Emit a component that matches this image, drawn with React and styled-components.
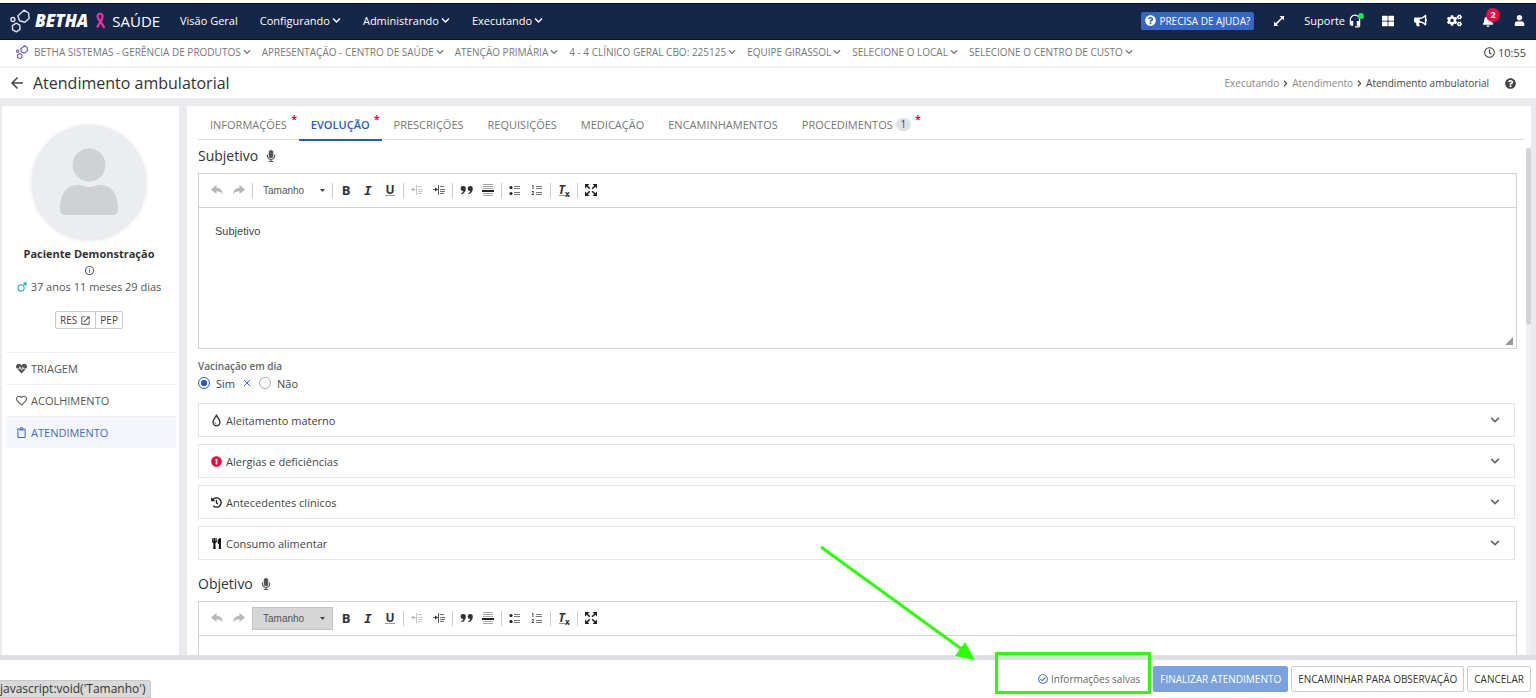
import React, { useState } from "react";
import styled, { createGlobalStyle, css } from "styled-components";
import {
  FaBell,
  FaBullhorn,
  FaChevronDown,
  FaChevronRight,
  FaCogs,
  FaExclamationCircle,
  FaHeartbeat,
  FaHistory,
  FaMicrophone,
  FaQuestionCircle,
  FaRegCheckCircle,
  FaRegClipboard,
  FaRegClock,
  FaRegHeart,
  FaThLarge,
  FaUser,
  FaUtensils,
} from "react-icons/fa";
import {
  MdArrowBack,
  MdHeadsetMic,
  MdInfoOutline,
  MdOpenInNew,
} from "react-icons/md";

const GlobalStyle = createGlobalStyle`
  * {
    box-sizing: border-box;
  }
  body {
    margin: 0;
    font-family: "Open Sans", "Noto Sans", sans-serif;
    font-size: 11px;
    color: #444;
  }
  button, input, select, textarea {
    font-family: inherit;
    margin: 0;
  }
  button {
    cursor: pointer;
  }
  svg {
    display: block;
    flex: none;
  }
`;

const Page = styled.div`
  position: relative;
  display: flex;
  flex-direction: column;
  height: 100vh;
  overflow: hidden;
  background-color: #fff;
`;

/* top bar */
const TopBar = styled.header`
  display: flex;
  align-items: center;
  height: 37px;
  flex: none;
  margin-top: 3px;
  padding: 0 11px 2px 10px;
  color: #fff;
  background-color: #152647;
  border-top: 1px solid #010a3d;
  border-bottom: 1px solid #0a1230;
`;
const Brand = styled.a`
  display: flex;
  align-items: center;
  width: 149px;
  margin-right: 21px;
  color: #fff;
  text-decoration: none;
`;
const BrandName = styled.span`
  font-size: 17px;
  font-weight: 800;
  font-style: italic;
  line-height: 20px;
  margin: 0 7px 0 5px;
`;
const BrandProduct = styled.span`
  font-size: 15px;
  line-height: 20px;
  margin-left: 6px;
`;
const Nav = styled.nav`
  display: flex;
  flex: 1;
  gap: 22px;
`;
const NavLink = styled.a`
  display: flex;
  align-items: center;
  gap: 2px;
  color: #fff;
  font-size: 11px;
  text-decoration: none;
  white-space: nowrap;
`;
const TopActions = styled.div`
  display: flex;
  align-items: center;
  gap: 20px;
`;
const HelpButton = styled.button`
  display: flex;
  align-items: center;
  gap: 3px;
  height: 18px;
  padding: 0 4px;
  border: none;
  border-radius: 2px;
  color: #fff;
  background-color: #3767c3;
  font-size: 10px;
  white-space: nowrap;
`;
const TopButton = styled.button`
  position: relative;
  display: flex;
  align-items: center;
  gap: 3px;
  padding: 0;
  border: none;
  background: none;
  color: #fff;
  font-size: 11px;
`;
const OnlineDot = styled.span`
  position: absolute;
  top: 0;
  right: -2px;
  width: 6px;
  height: 6px;
  border-radius: 50%;
  background-color: #0be850;
`;
const Counter = styled.span`
  position: absolute;
  top: -7px;
  right: -6px;
  width: 14px;
  height: 14px;
  line-height: 14px;
  border-radius: 50%;
  background-color: #f5053b;
  font-size: 9px;
  font-weight: 700;
  text-align: center;
`;

/* context bar */
const ContextBar = styled.div`
  display: flex;
  align-items: center;
  gap: 11px;
  height: 28px;
  flex: none;
  padding: 0 10px 2px 16px;
  border-bottom: 2px solid #f2f2f2;
`;
const ContextButton = styled.button`
  display: flex;
  align-items: center;
  gap: 2px;
  padding: 0;
  border: none;
  background: none;
  color: #777;
  font-size: 10px;
  white-space: nowrap;
`;
const ContextLogo = styled.span`
  margin-right: 4px;
`;
const Clock = styled.div`
  display: flex;
  align-items: center;
  gap: 3px;
  margin-left: auto;
  font-size: 11px;
`;

/* title bar */
const TitleBar = styled.div`
  display: flex;
  align-items: center;
  height: 30px;
  flex: none;
  padding: 0 20px 0 8px;
`;
const BackButton = styled.button`
  display: flex;
  padding: 0;
  margin-right: 7px;
  border: none;
  background: none;
  color: #444;
`;
const PageTitle = styled.h1`
  flex: 1;
  margin: 0;
  font-size: 16px;
  font-weight: 400;
  color: #333;
`;
const Breadcrumb = styled.nav`
  display: flex;
  align-items: center;
  gap: 3px;
  margin-right: 16px;
  font-size: 10px;
  color: #444;
  a {
    color: #888;
    text-decoration: none;
  }
`;

/* body */
const Body = styled.div`
  display: flex;
  flex: 1;
  min-height: 0;
  gap: 8px;
  padding: 8px 5px 0 2px;
  background-color: #e9ebef;
`;
const Sidebar = styled.aside`
  width: 177px;
  flex: none;
  padding: 19px 3px 0 4px;
  background-color: #fff;
`;
const Patient = styled.div`
  display: flex;
  flex-direction: column;
  align-items: center;
  padding-right: 4px;
`;
const Avatar = styled.div`
  width: 114px;
  height: 114px;
  border-radius: 50%;
  background-color: #ebedf0;
  box-shadow: 0 1px 4px #ddd;
`;
const PatientName = styled.strong`
  margin-top: 6px;
  line-height: 18px;
  font-size: 11px;
  font-weight: 700;
  color: #333;
`;
const InfoButton = styled.button`
  display: flex;
  margin: 2px 0;
  padding: 0;
  border: none;
  background: none;
  color: #555;
`;
const Age = styled.div`
  display: flex;
  align-items: center;
  gap: 4px;
  line-height: 18px;
  font-size: 11px;
  color: #555;
`;
const RecordButtons = styled.div`
  display: flex;
  margin-top: 15px;
  border: 1px solid #ccc;
  border-radius: 2px;
`;
const RecordButton = styled.button`
  display: flex;
  align-items: center;
  gap: 3px;
  height: 16px;
  padding: 0 4px;
  border: none;
  background: none;
  color: #444;
  font-size: 10px;
  & + & {
    border-left: 1px solid #ccc;
  }
`;
const SideMenu = styled.nav`
  margin-top: 23px;
`;
const SideLink = styled.a`
  display: flex;
  align-items: center;
  gap: 4px;
  height: 32px;
  padding: 0 10px;
  border-top: 1px solid #f0f0f0;
  font-size: 11px;
  text-decoration: none;
  color: ${(props) => (props.$active ? "#3d6cc8" : "#555")};
  background-color: ${(props) => (props.$active ? "#f4f6fb" : "#fff")};
`;
const Main = styled.main`
  display: flex;
  flex-direction: column;
  flex: 1;
  min-width: 0;
  background-color: #fff;
`;
const Tabs = styled.div`
  display: flex;
  height: 34px;
  flex: none;
  margin: 0 7px 0 11px;
  border-bottom: 1px solid #dcdfe0;
`;
const Tab = styled.button`
  position: relative;
  display: flex;
  align-items: center;
  gap: 3px;
  height: 35px;
  padding: 4px 12px 0;
  border: none;
  border-bottom: 2px solid transparent;
  background: none;
  color: #777;
  font-size: 11px;
  white-space: nowrap;
  ${(props) =>
    props.$active &&
    css`
      border-bottom-color: #2a5bc4;
      color: #2a5bc4;
      font-weight: 600;
    `}
`;
const Required = styled.span`
  position: absolute;
  top: 6px;
  right: 2px;
  color: #f5053b;
  font-size: 10px;
  font-weight: 700;
`;
const TabBadge = styled.span`
  width: 15px;
  height: 13px;
  line-height: 13px;
  border-radius: 7px;
  background-color: #dfe1e4;
  color: #444;
  font-size: 10px;
`;
const ScrollArea = styled.div`
  display: flex;
  flex: 1;
  min-height: 0;
`;
const Content = styled.div`
  flex: 1;
  min-width: 0;
  overflow: hidden;
  padding: 6px 9px 0 11px;
`;
const ScrollTrack = styled.div`
  width: 5px;
  flex: none;
  margin-top: 8px;
  background-color: #f0f0f0;
`;
const ScrollThumb = styled.div`
  height: 35%;
  border-radius: 3px;
  background-color: #d3d3d3;
`;

const SectionTitle = styled.h2`
  display: flex;
  align-items: center;
  gap: 7px;
  height: 20px;
  line-height: 20px;
  margin: 0 0 7px;
  font-size: 14px;
  font-weight: 400;
  color: #333;
`;
const MicButton = styled.button`
  padding: 0;
  border: none;
  background: none;
  color: #555;
`;

/* rich text editor */
const EditorBox = styled.div`
  position: relative;
  border: 1px solid #d3d3d3;
`;
const Toolbar = styled.div`
  display: flex;
  align-items: center;
  height: 34px;
  padding: 0 7px 1px;
  border-bottom: 1px solid #d3d3d3;
`;
const Tool = styled.button`
  display: flex;
  align-items: center;
  justify-content: center;
  width: 22px;
  height: 23px;
  padding: 0;
  border: none;
  background: none;
  color: #333;
  opacity: ${(props) => (props.disabled ? 0.35 : 1)};
`;
const Separator = styled.span`
  width: 1px;
  height: 15px;
  margin: 0 2px;
  background-color: #ccc;
`;
const SizeBox = styled.div`
  display: flex;
  align-items: center;
  width: 81px;
  height: 23px;
  margin: 0 2px;
  padding-right: 8px;
  background: linear-gradient(#ccc, #ccc) left / 1px 15px no-repeat,
    linear-gradient(#ccc, #ccc) right / 1px 15px no-repeat;
  ${(props) =>
    props.$pressed &&
    css`
      background: #d6d6d6;
      outline: 1px solid #c4c4c4;
      outline-offset: -1px;
    `}
`;
const SizeSelect = styled.select`
  flex: 1;
  min-width: 0;
  padding: 0 0 0 11px;
  border: none;
  appearance: none;
  background: none;
  color: #555;
  font-family: "Liberation Sans", Arial, sans-serif;
  font-size: 10px;
`;
const BoldMark = styled.b`
  font-size: 13px;
  line-height: 13px;
`;
const ItalicMark = styled.i`
  font-family: "DejaVu Sans Mono", monospace;
  font-size: 13px;
  line-height: 13px;
  font-weight: 700;
`;
const UnderlineMark = styled.b`
  font-size: 12px;
  line-height: 11px;
  border-bottom: 1px solid #999;
`;
const ClearMark = styled.i`
  font-size: 12px;
  line-height: 11px;
  font-weight: 700;
  border-bottom: 1px solid #999;
  sub {
    font-style: normal;
    font-size: 8px;
    line-height: 0;
  }
`;
const EditorText = styled.textarea`
  display: block;
  width: 100%;
  height: 140px;
  padding: 17px 16px;
  border: none;
  outline: none;
  resize: none;
  color: #444;
  font-family: "Liberation Sans", Arial, sans-serif;
  font-size: 11px;
`;
const ResizeHandle = styled.span`
  position: absolute;
  right: 3px;
  bottom: 3px;
  border-left: 8px solid transparent;
  border-bottom: 8px solid #999;
`;

const Vaccination = styled.fieldset`
  margin: 0;
  padding: 10px 0 0;
  border: none;
`;
const Legend = styled.legend`
  float: left;
  width: 100%;
  padding: 0;
  line-height: 14px;
  font-size: 10px;
  font-weight: 600;
  color: #666;
`;
const RadioRow = styled.div`
  display: flex;
  align-items: center;
  clear: both;
  height: 20px;
  gap: 8px;
`;
const RadioLabel = styled.label`
  display: flex;
  align-items: center;
  gap: 6px;
`;
const Radio = styled.input`
  appearance: none;
  width: 12px;
  height: 12px;
  border: 1px solid #aaa;
  border-radius: 50%;
  &:checked {
    border-color: #2a5bc4;
    background: radial-gradient(#2a5bc4 40%, #fff 50%);
  }
`;
const ClearButton = styled.button`
  display: flex;
  padding: 0;
  border: none;
  background: none;
  color: #3d6cc8;
`;

const Cards = styled.div`
  display: flex;
  flex-direction: column;
  gap: 7px;
  margin: 10px 2px 14px 0;
`;
const Card = styled.button`
  display: flex;
  align-items: center;
  gap: 4px;
  height: 34px;
  padding: 0 14px 0 12px;
  border: 1px solid #e4e4e4;
  background-color: #fff;
  color: #444;
  font-size: 11px;
  text-align: left;
  span {
    flex: 1;
  }
`;

/* footer */
const Footer = styled.footer`
  display: flex;
  align-items: center;
  justify-content: flex-end;
  gap: 3px;
  height: 43px;
  flex: none;
  padding: 0 5px 0 0;
  border-top: 5px solid #dddfe3;
  background-color: #fff;
`;
const SaveStatus = styled.div`
  position: relative;
  display: flex;
  align-items: center;
  gap: 3px;
  margin-right: 10px;
  font-size: 10px;
  color: #666;
`;
const Highlight = styled.span`
  position: absolute;
  right: -11px;
  top: -20px;
  width: 156px;
  height: 42px;
  border: 3px solid #2cff05;
`;
const Arrow = styled.svg`
  position: absolute;
  right: 559px;
  bottom: 36px;
`;
const FooterButton = styled.button`
  height: 26px;
  padding: 0 6px;
  border: 1px solid ${(props) => (props.$primary ? "#7aa2dd" : "#ccc")};
  border-radius: 2px;
  background-color: ${(props) => (props.$primary ? "#7aa2dd" : "#fff")};
  color: ${(props) => (props.$primary ? "#fff" : "#333")};
  font-size: 10px;
  white-space: nowrap;
`;
const LinkHint = styled.div`
  position: absolute;
  left: 0;
  bottom: 0;
  height: 18px;
  line-height: 16px;
  padding-right: 5px;
  border: 1px solid #c8c8c8;
  border-left: none;
  border-radius: 0 3px 0 0;
  background-color: #d9d9d9;
  color: #333;
  font-size: 12px;
`;

const Hexagons = ({ size, color, weight = 1.4 }) => (
  <svg
    width={size}
    height={(size * 24) / 20}
    viewBox="0 0 20 24"
    fill="none"
    stroke={color}
    strokeWidth={weight}
    strokeLinejoin="round"
  >
    <path d="M14 1.200l4.600 2.800.5 5.500-4.300 3.700-5.300-1.400-1.600-5.100z" />
    <path d="M6.200 14.200l3.600 2 .2 4.200-3.600 2.400-3.800-2-.2-4.200z" />
    <circle cx="2.900" cy="10.500" r="2" />
  </svg>
);

const Ribbon = () => (
  <svg width="11" height="18" viewBox="0 0 11 18" fill="none" stroke="#f22fa8">
    <path
      d="M9.200 16C7.500 11 2.600 8 2.600 4.300c0-3.400 5-3.400 5 0C7.600 8 4.500 11 2 15.500"
      strokeWidth="2.200"
    />
  </svg>
);

const DiagonalArrows = () => (
  <svg width="10" height="10" viewBox="0 0 10 10" fill="#fff">
    <path d="M5.600 0H10v4.400zM0 5.600V10h4.400z" />
    <path d="M2 8l6-6" stroke="#fff" strokeWidth="1.600" />
  </svg>
);

const Male = () => (
  <svg
    width="10"
    height="10"
    viewBox="0 0 11 11"
    fill="none"
    stroke="#26a3dd"
    strokeWidth="1.2"
  >
    <circle cx="4.500" cy="6.500" r="3.400" />
    <path d="M7 4l3-3M7 1h3v3" />
  </svg>
);

const Person = () => (
  <svg width="114" height="114" viewBox="0 0 114 114" fill="#d0d1d3">
    <circle cx="57" cy="40" r="16.500" />
    <path d="M28 84c0-18 9-24 18-24 4 0 6 2 11 2s7-2 11-2c9 0 18 6 18 24 0 4-2 6-6 6H34c-4 0-6-2-6-6z" />
  </svg>
);

const Drop = () => (
  <svg
    width="11"
    height="13"
    viewBox="0 0 11 13"
    fill="none"
    stroke="#333"
    strokeWidth="1.3"
    strokeLinejoin="round"
  >
    <path d="M5.500 1C4.800 3.500 2 5.500 2 8.300a3.500 3.500 0 0 0 7 0C9 5.500 6.200 3.500 5.500 1z" />
    <path d="M3.800 8.300c0 1 .7 1.800 1.700 1.900" strokeWidth="0.8" />
  </svg>
);

const Undo = () => (
  <svg width="12" height="10" viewBox="0 0 12 10" fill="#333">
    <path d="M0 4.500L5.500 0v2.800C9 3 11.500 5 12 9.500 10.500 7 8.500 6.200 5.500 6.200V9z" />
  </svg>
);

const Redo = () => (
  <svg width="12" height="10" viewBox="0 0 12 10" fill="#333">
    <path d="M12 4.500L6.500 0v2.800C3 3 .5 5 0 9.500c1.500-2.500 3.500-3.300 6.500-3.300V9z" />
  </svg>
);

const Indent = ({ out }) => (
  <svg width="12" height="12" viewBox="0 0 12 12" stroke="#333" fill="#333">
    <path d="M5.500 1v10" opacity="0.8" />
    <path d="M7 2.500h4M7 5.500h5M7 7.500h5M7 9.500h4" opacity="0.7" />
    <path d="M0 5.500h5" opacity="0.7" />
    <path d={out ? "M3 3.500v4L0 5.500z" : "M2 3.500v4L5 5.500z"} stroke="none" />
  </svg>
);

// closing quote marks: round head with the tail curling down to the left
const Quote = () => (
  <svg width="13" height="10" viewBox="0 0 13 10" fill="#333">
    <path d="M3 1a2.600 2.600 0 0 1 2.800 2.800C5.800 6.500 4.200 8.600 1.600 9.300l-.5-1C2.500 7.700 3.200 6.800 3.300 6A2.500 2.500 0 1 1 3 1z" />
    <path d="M10 1a2.600 2.600 0 0 1 2.800 2.800c0 2.700-1.600 4.800-4.200 5.500l-.5-1c1.400-.6 2.100-1.500 2.200-2.300A2.500 2.500 0 1 1 10 1z" />
  </svg>
);

const Rule = () => (
  <svg width="12" height="13" viewBox="0 0 12 13">
    <path
      d="M1 .5h10M1 2.500h10M1 4.500h10M1 9.500h10M1 11.500h10"
      stroke="#aaa"
      strokeWidth="1"
    />
    <path d="M0 7h12" stroke="#222" strokeWidth="2" />
  </svg>
);

const BulletList = () => (
  <svg width="12" height="11" viewBox="0 0 12 11" fill="#222">
    <circle cx="2" cy="2.500" r="1.600" />
    <circle cx="2" cy="8.500" r="1.600" />
    <path d="M5 1.500h6M5 3.500h6M5 7.500h6M5 9.500h6" stroke="#777" />
  </svg>
);

const NumberList = () => (
  <svg width="12" height="12" viewBox="0 0 12 12" fill="none" stroke="#444">
    <path d="M1 1.500h1V5M.8 7.500h1.700v1L1 10.500h2" />
    <path d="M5 2.500h6M5 4.500h6M5 8.500h6M5 10.500h6" stroke="#777" />
  </svg>
);

const Maximize = () => (
  <svg width="12" height="12" viewBox="0 0 12 12" fill="#222">
    <path d="M0 0h4.500L0 4.500zM12 0v4.500L7.500 0zM0 12V7.500L4.500 12zM12 12H7.500L12 7.500z" />
    <path
      d="M1.500 1.500l3.300 3.300M10.500 1.500L7.200 4.800M1.500 10.500l3.300-3.300M10.500 10.500L7.200 7.200"
      stroke="#222"
      strokeWidth="1.600"
    />
  </svg>
);

const Editor = ({ title, defaultText, pressed }) => (
  <>
    <SectionTitle>
      {title}
      <MicButton aria-label={`Ditar ${title}`}>
        <FaMicrophone size={12} />
      </MicButton>
    </SectionTitle>
    <EditorBox>
      <Toolbar>
        <Tool aria-label="Desfazer" disabled>
          <Undo />
        </Tool>
        <Tool aria-label="Refazer" disabled>
          <Redo />
        </Tool>
        <SizeBox $pressed={pressed}>
          <SizeSelect aria-label={`Tamanho da fonte em ${title}`}>
            <option>Tamanho</option>
          </SizeSelect>
          <svg width="5" height="3" viewBox="0 0 5 3" fill="#444">
            <path d="M0 0h5L2.500 3z" />
          </svg>
        </SizeBox>
        <Tool aria-label="Negrito">
          <BoldMark>B</BoldMark>
        </Tool>
        <Tool aria-label="Itálico">
          <ItalicMark>I</ItalicMark>
        </Tool>
        <Tool aria-label="Sublinhado">
          <UnderlineMark>U</UnderlineMark>
        </Tool>
        <Separator />
        <Tool aria-label="Diminuir recuo" disabled>
          <Indent out />
        </Tool>
        <Tool aria-label="Aumentar recuo">
          <Indent />
        </Tool>
        <Separator />
        <Tool aria-label="Citação">
          <Quote />
        </Tool>
        <Tool aria-label="Linha horizontal">
          <Rule />
        </Tool>
        <Separator />
        <Tool aria-label="Lista com marcadores">
          <BulletList />
        </Tool>
        <Tool aria-label="Lista numerada">
          <NumberList />
        </Tool>
        <Separator />
        <Tool aria-label="Remover formatação">
          <ClearMark>
            T<sub>x</sub>
          </ClearMark>
        </Tool>
        <Separator />
        <Tool aria-label="Maximizar">
          <Maximize />
        </Tool>
      </Toolbar>
      <EditorText aria-label={title} defaultValue={defaultText} />
      <ResizeHandle />
    </EditorBox>
  </>
);

const menus = ["Configurando", "Administrando", "Executando"];

const contexts = [
  "BETHA SISTEMAS - GERÊNCIA DE PRODUTOS",
  "APRESENTAÇÃO - CENTRO DE SAÚDE",
  "ATENÇÃO PRIMÁRIA",
  "4 - 4 CLÍNICO GERAL CBO: 225125",
  "EQUIPE GIRASSOL",
  "SELECIONE O LOCAL",
  "SELECIONE O CENTRO DE CUSTO",
];

const tabs = [
  { name: "INFORMAÇÕES", required: true },
  { name: "EVOLUÇÃO", required: true },
  { name: "PRESCRIÇÕES" },
  { name: "REQUISIÇÕES" },
  { name: "MEDICAÇÃO" },
  { name: "ENCAMINHAMENTOS" },
  { name: "PROCEDIMENTOS", required: true, count: 1 },
];

const cards = [
  { name: "Aleitamento materno", icon: <Drop /> },
  {
    name: "Alergias e deficiências",
    icon: <FaExclamationCircle size={11} color="#f5053b" />,
  },
  { name: "Antecedentes clínicos", icon: <FaHistory size={11} color="#222" /> },
  { name: "Consumo alimentar", icon: <FaUtensils size={11} color="#111" /> },
];

const App = () => {
  const [tab, setTab] = useState("EVOLUÇÃO");
  const [vaccinated, setVaccinated] = useState("sim");

  return (
    <Page>
      <GlobalStyle />
      <TopBar>
        <Brand href="#">
          <Hexagons size={20} color="#dfe3ec" />
          <BrandName>BETHA</BrandName>
          <Ribbon />
          <BrandProduct>SAÚDE</BrandProduct>
        </Brand>
        <Nav>
          <NavLink href="#">Visão Geral</NavLink>
          {menus.map((menu) => (
            <NavLink href="#" key={menu}>
              {menu}
              <FaChevronDown size={9} />
            </NavLink>
          ))}
        </Nav>
        <TopActions>
          <HelpButton>
            <FaQuestionCircle size={11} />
            PRECISA DE AJUDA?
          </HelpButton>
          <TopButton aria-label="Expandir">
            <DiagonalArrows />
          </TopButton>
          <TopButton>
            Suporte
            <MdHeadsetMic size={14} />
            <OnlineDot />
          </TopButton>
          <TopButton aria-label="Aplicativos">
            <FaThLarge size={12} />
          </TopButton>
          <TopButton aria-label="Novidades">
            <FaBullhorn size={13} />
          </TopButton>
          <TopButton aria-label="Configurações">
            <FaCogs size={15} />
          </TopButton>
          <TopButton aria-label="Notificações">
            <FaBell size={12} />
            <Counter>2</Counter>
          </TopButton>
          <TopButton aria-label="Usuário">
            <FaUser size={11} />
          </TopButton>
        </TopActions>
      </TopBar>

      <ContextBar>
        {contexts.map((context, index) => (
          <ContextButton key={context}>
            {index === 0 && (
              <ContextLogo>
                <Hexagons size={12} color="#7a5cc0" weight={2} />
              </ContextLogo>
            )}
            {context}
            <FaChevronDown size={8} />
          </ContextButton>
        ))}
        <Clock>
          <FaRegClock size={11} />
          10:55
        </Clock>
      </ContextBar>

      <TitleBar>
        <BackButton aria-label="Voltar">
          <MdArrowBack size={18} />
        </BackButton>
        <PageTitle>Atendimento ambulatorial</PageTitle>
        <Breadcrumb>
          <a href="#">Executando</a>
          <FaChevronRight size={7} />
          <a href="#">Atendimento</a>
          <FaChevronRight size={7} />
          <span>Atendimento ambulatorial</span>
        </Breadcrumb>
        <FaQuestionCircle size={11} />
      </TitleBar>

      <Body>
        <Sidebar>
          <Patient>
            <Avatar>
              <Person />
            </Avatar>
            <PatientName>Paciente Demonstração</PatientName>
            <InfoButton aria-label="Informações do paciente">
              <MdInfoOutline size={11} />
            </InfoButton>
            <Age>
              <Male />
              37 anos 11 meses 29 dias
            </Age>
            <RecordButtons>
              <RecordButton>
                RES
                <MdOpenInNew size={11} />
              </RecordButton>
              <RecordButton>PEP</RecordButton>
            </RecordButtons>
          </Patient>
          <SideMenu>
            <SideLink href="#">
              <FaHeartbeat size={11} />
              TRIAGEM
            </SideLink>
            <SideLink href="#">
              <FaRegHeart size={11} />
              ACOLHIMENTO
            </SideLink>
            <SideLink href="#" $active>
              <FaRegClipboard size={11} />
              ATENDIMENTO
            </SideLink>
          </SideMenu>
        </Sidebar>

        <Main>
          <Tabs role="tablist">
            {tabs.map((item) => (
              <Tab
                key={item.name}
                role="tab"
                aria-selected={tab === item.name}
                $active={tab === item.name}
                onClick={() => setTab(item.name)}
              >
                {item.name}
                {item.count && <TabBadge>{item.count}</TabBadge>}
                {item.required && <Required>*</Required>}
              </Tab>
            ))}
          </Tabs>
          <ScrollArea>
            <Content>
              <Editor title="Subjetivo" defaultText="Subjetivo" />
              <Vaccination>
                <Legend>Vacinação em dia</Legend>
                <RadioRow>
                  <RadioLabel>
                    <Radio
                      type="radio"
                      name="vacinacao"
                      checked={vaccinated === "sim"}
                      onChange={() => setVaccinated("sim")}
                    />
                    Sim
                  </RadioLabel>
                  <ClearButton
                    aria-label="Limpar"
                    onClick={() => setVaccinated("")}
                  >
                    <svg width="8" height="8" viewBox="0 0 8 8">
                      <path d="M1 1l6 6M7 1L1 7" stroke="currentColor" />
                    </svg>
                  </ClearButton>
                  <RadioLabel>
                    <Radio
                      type="radio"
                      name="vacinacao"
                      checked={vaccinated === "nao"}
                      onChange={() => setVaccinated("nao")}
                    />
                    Não
                  </RadioLabel>
                </RadioRow>
              </Vaccination>
              <Cards>
                {cards.map((card) => (
                  <Card key={card.name}>
                    {card.icon}
                    <span>{card.name}</span>
                    <FaChevronDown size={10} color="#666" />
                  </Card>
                ))}
              </Cards>
              <Editor title="Objetivo" defaultText="" pressed />
            </Content>
            <ScrollTrack>
              <ScrollThumb />
            </ScrollTrack>
          </ScrollArea>
        </Main>
      </Body>

      <Footer>
        <SaveStatus>
          <FaRegCheckCircle size={10} color="#3d6cc8" />
          Informações salvas
          <Highlight />
        </SaveStatus>
        <FooterButton $primary>FINALIZAR ATENDIMENTO</FooterButton>
        <FooterButton>ENCAMINHAR PARA OBSERVAÇÃO</FooterButton>
        <FooterButton>CANCELAR</FooterButton>
      </Footer>

      <Arrow width="158" height="118" viewBox="0 0 158 118">
        <path d="M2 3l142 103" stroke="#2cff05" strokeWidth="3" />
        <path d="M156 116l-20-4 10-14z" fill="#2cff05" />
      </Arrow>
      <LinkHint>javascript:void('Tamanho')</LinkHint>
    </Page>
  );
};

export default App;
